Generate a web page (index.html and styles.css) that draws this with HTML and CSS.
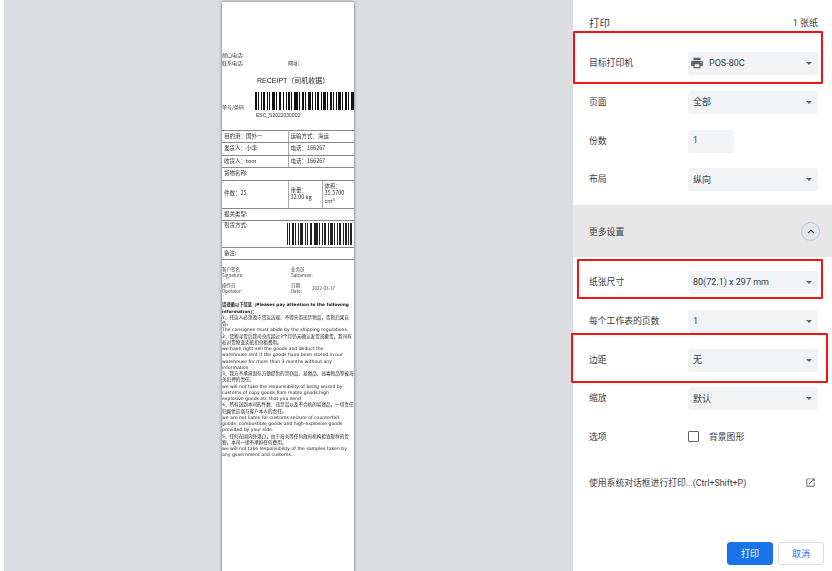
FILE: index.html
```html
<!DOCTYPE html>
<html lang="zh-CN">
<head>
    <meta charset="UTF-8">
    <meta name="viewport" content="width=device-width, initial-scale=1.0">
    <title>打印</title>
    <link rel="stylesheet" href="styles.css">
</head>
<body>
    <div class="preview">
        <div class="paper">
            <div class="contact">
                <div>邮口电话:</div>
                <div class="contact-row"><span class="contact-left">联系电话:</span><span>网址:</span></div>
            </div>
            <div class="receipt-title">RECEIPT（司机收据）</div>
            <div class="waybill">
                <span class="waybill-label">单号/条码</span>
                <svg class="barcode-main" viewBox="0 0 99 18" preserveAspectRatio="none">
                    <path fill="#111" d="M0 0h2v18H0zM3 0h1v18H3zM6 0h1v18H6zM8 0h2v18H8zM12 0h1v18h-1zM14 0h1v18h-1zM17 0h3v18h-3zM21 0h1v18h-1zM24 0h2v18h-2zM28 0h1v18h-1zM31 0h1v18h-1zM33 0h2v18h-2zM36 0h1v18h-1zM39 0h4v18h-4zM44 0h1v18h-1zM47 0h2v18h-2zM50 0h1v18h-1zM53 0h3v18h-3zM57 0h1v18h-1zM60 0h1v18h-1zM62 0h2v18h-2zM66 0h1v18h-1zM68 0h3v18h-3zM72 0h1v18h-1zM75 0h2v18h-2zM78 0h1v18h-1zM81 0h1v18h-1zM83 0h3v18h-3zM87 0h1v18h-1zM90 0h2v18h-2zM93 0h1v18h-1zM96 0h3v18h-3z"/>
                </svg>
            </div>
            <div class="waybill-no">ESC_S2022030002</div>

            <table class="info-table">
                <colgroup>
                    <col class="col-a">
                    <col class="col-b">
                    <col class="col-c">
                </colgroup>
                <tr class="row-s">
                    <td>目的港：国外一</td>
                    <td colspan="2">运输方式：海运</td>
                </tr>
                <tr class="row-s">
                    <td>发货人：小李</td>
                    <td colspan="2">电话：166267</td>
                </tr>
                <tr class="row-s">
                    <td>收货人：tom</td>
                    <td colspan="2">电话：166267</td>
                </tr>
                <tr class="row-s">
                    <td colspan="3">货物名称:</td>
                </tr>
                <tr class="row-l">
                    <td>件数：25</td>
                    <td>重量：<br>32.00 kg</td>
                    <td>体积：<br>35.5700<br>cm³</td>
                </tr>
                <tr class="row-s">
                    <td colspan="3">报关类型:</td>
                </tr>
                <tr class="row-code">
                    <td colspan="3">
                        <div class="arrival">
                            <span>到货方式:</span>
                            <svg class="barcode-small" viewBox="0 0 65 22" preserveAspectRatio="none">
                                <path fill="#222" d="M0 0h1v22H0zM2 0h1v22H2zM5 0h2v22H5zM8 0h1v22H8zM11 0h1v22h-1zM13 0h3v22h-3zM18 0h1v22h-1zM20 0h1v22h-1zM23 0h2v22h-2zM27 0h4v22h-4zM32 0h1v22h-1zM35 0h1v22h-1zM37 0h2v22h-2zM41 0h1v22h-1zM43 0h3v22h-3zM47 0h1v22h-1zM50 0h1v22h-1zM52 0h2v22h-2zM56 0h1v22h-1zM58 0h2v22h-2zM61 0h1v22h-1zM63 0h2v22h-2z"/>
                            </svg>
                        </div>
                    </td>
                </tr>
                <tr class="row-s">
                    <td colspan="3">备注:</td>
                </tr>
            </table>

            <div class="sign-row sign-first">
                <div class="sign-left">客户签名<br>Signature:</div>
                <div>业务员<br>Salesman:</div>
            </div>
            <div class="sign-row">
                <div class="sign-left">操作员<br>Operator:</div>
                <div>日期<br>Date:</div>
                <div class="sign-date">2022-03-17</div>
            </div>

            <div class="notes">
                <div class="notes-title">请遵循以下信息（Pleases pay attention to the following information）：</div>
                <div>1、托运人必须遵守货运法规、不得夹带违禁物品，否则后果自负。</div>
                <div>The consignee must abide by the shipping regulations.</div>
                <div>2、货物寻货后我司仓库超过3个月仍未确认发货或撤货，我司有权对货物变卖抵扣仓租费用。</div>
                <div>we have right sell the goods and deduct the<br>warehouse rent if the goods have been stored in our<br>warehouse for more than 3 months without any<br>information</div>
                <div>3、我方不承担因存方便提供的禁商品、易燃品、高毒物品等被海关扣押的责任。</div>
                <div>we will not take the responsibility of being seized by<br>customs of copy goods,flam mable goods,high<br>explosive goods etc that you send</div>
                <div>4、所有送到本司的件数、违禁品以及不合格的易燃品，一切责任归属供应商与客户本人的责任。</div>
                <div>we are not liable for customs seizure of counterfeit<br>goods ,combustible goods and high-explosive goods<br>provided by your side.</div>
                <div>5、任何在国内外港口，由于海关等任何政府机构检查取样的货物，本司一律不承担任何费用。</div>
                <div>we will not take responsibility of the samples taken by<br>any government and customs.</div>
            </div>
        </div>
    </div>

    <div class="panel">
        <div class="panel-head">
            <span class="panel-title">打印</span>
            <span class="sheet-count">1 张纸</span>
        </div>

        <div class="setting">
            <span class="setting-label">目标打印机</span>
            <div class="select">
                <svg class="printer-icon" viewBox="0 0 24 24"><path d="M19 8H5c-1.66 0-3 1.34-3 3v6h4v4h12v-4h4v-6c0-1.66-1.34-3-3-3zm-3 11H8v-5h8v5zm3-7c-.55 0-1-.45-1-1s.45-1 1-1 1 .45 1 1-.45 1-1 1zm-1-9H6v4h12V3z"/></svg>
                <span class="select-text">POS-80C</span>
            </div>
        </div>
        <div class="setting">
            <span class="setting-label">页面</span>
            <div class="select"><span class="select-text">全部</span></div>
        </div>
        <div class="setting">
            <span class="setting-label">份数</span>
            <div class="copies">1</div>
        </div>
        <div class="setting">
            <span class="setting-label">布局</span>
            <div class="select"><span class="select-text">纵向</span></div>
        </div>

        <div class="more">
            <span>更多设置</span>
            <span class="more-btn">
                <svg viewBox="0 0 10 6"><path d="M1.2 5L5 1.4 8.8 5" fill="none" stroke="#3c4043" stroke-width="1.5"/></svg>
            </span>
        </div>

        <div class="setting">
            <span class="setting-label">纸张尺寸</span>
            <div class="select"><span class="select-text">80(72.1) x 297 mm</span></div>
        </div>
        <div class="setting">
            <span class="setting-label">每个工作表的页数</span>
            <div class="select"><span class="select-text">1</span></div>
        </div>
        <div class="setting">
            <span class="setting-label">边距</span>
            <div class="select"><span class="select-text">无</span></div>
        </div>
        <div class="setting">
            <span class="setting-label">缩放</span>
            <div class="select"><span class="select-text">默认</span></div>
        </div>
        <div class="setting">
            <span class="setting-label">选项</span>
            <label class="option">
                <span class="checkbox"></span>
                <span>背景图形</span>
            </label>
        </div>

        <div class="system-dialog">
            <span>使用系统对话框进行打印...(Ctrl+Shift+P)</span>
            <svg class="open-icon" viewBox="0 0 24 24"><path d="M19 19H5V5h7V3H5c-1.11 0-2 .9-2 2v14c0 1.1.89 2 2 2h14c1.1 0 2-.9 2-2v-7h-2v7zM14 3v2h3.59l-9.83 9.83 1.41 1.41L19 6.41V10h2V3h-7z"/></svg>
        </div>

        <div class="actions">
            <button class="btn btn-primary">打印</button>
            <button class="btn">取消</button>
        </div>
    </div>

    <div class="mark mark-printer"></div>
    <div class="mark mark-paper"></div>
    <div class="mark mark-margin"></div>
</body>
</html>
```

FILE: styles.css
```css
* {
    box-sizing: border-box;
}
html, body {
    height: 100%;
}
body {
    position: relative;
    display: flex;
    width: 832px;
    height: 571px;
    margin: 0;
    padding-left: 4px;
    overflow: hidden;
    background-color: #fff;
    font-family: Roboto, "Noto Sans CJK SC", sans-serif;
    color: #3c4043;
}

/* preview side */
.preview {
    display: flex;
    justify-content: center;
    width: 569px;
    height: 571px;
    padding: 2px 1px 0 0;
    overflow: hidden;
    background-color: #dcdde1;
}
.paper {
    flex: none;
    width: 132px;
    height: 640px;
    padding-top: 49px;
    background-color: #fff;
    box-shadow: 0 0 3px rgba(0, 0, 0, 0.55);
    font-family: "Noto Sans CJK SC", sans-serif;
    font-size: 5px;
    line-height: 8px;
    color: #333;
    filter: blur(0.35px);
}
.contact-row {
    display: flex;
}
.contact-left {
    width: 66px;
}
.receipt-title {
    margin-top: 10px;
    padding-left: 35px;
    font-family: "Liberation Sans", "Noto Sans CJK SC", sans-serif;
    font-size: 7px;
    color: #222;
}
.waybill {
    display: flex;
    align-items: flex-end;
    justify-content: space-between;
    height: 18px;
    margin-top: 7px;
}
.waybill-label {
    line-height: 6px;
}
.barcode-main {
    width: 99px;
    height: 18px;
}
.waybill-no {
    margin-top: 1px;
    padding-left: 34px;
    font-family: "Liberation Sans", sans-serif;
}
.info-table {
    width: 132px;
    margin-top: 11px;
    table-layout: fixed;
    border-collapse: collapse;
    border-top: 1px solid #777;
    border-bottom: 1px solid #555;
}
.col-a {
    width: 66px;
}
.col-b {
    width: 34px;
}
.col-c {
    width: 32px;
}
.info-table td {
    padding: 0 1px 0 2px;
    border: 1px solid #888;
    border-left: 0;
    border-right: 1px solid #aaa;
    font-size: 5.5px;
    line-height: 7.5px;
    vertical-align: middle;
}
.info-table td:last-child {
    border-right: 0;
}
.row-s {
    height: 12.4px;
}
.row-l {
    height: 28px;
}
.row-code {
    height: 27px;
}
.info-table .row-code td {
    padding-right: 2px;
}
.arrival {
    display: flex;
    justify-content: space-between;
    align-items: flex-start;
}
.barcode-small {
    width: 65px;
    height: 22px;
    margin-top: 1px;
}
.sign-row {
    display: flex;
    font-size: 4.5px;
    line-height: 6px;
    margin-top: 4px;
    color: #444;
}
.sign-first {
    margin-top: 6px;
}
.sign-left {
    width: 69px;
}
.sign-date {
    margin: 3px 0 0 10px;
}
.notes {
    margin-top: 8px;
    font-family: "DejaVu Sans", "Noto Sans CJK SC", sans-serif;
    font-size: 4.6px;
    line-height: 6.25px;
    color: #222;
}
.notes-title {
    font-size: 4.3px;
    font-weight: bold;
    color: #111;
}

/* settings side */
.panel {
    width: 259px;
    height: 571px;
    padding-left: 16px;
    background-color: #fff;
    font-size: 8.8px;
}
.panel-head {
    display: flex;
    justify-content: space-between;
    align-items: center;
    width: 229px;
    height: 44px;
    padding-top: 1px;
}
.panel-title {
    font-size: 10.5px;
}
.sheet-count {
    font-size: 9px;
}
.setting {
    display: flex;
    align-items: flex-start;
    height: 38.75px;
    padding-top: 8px;
}
.setting-label {
    flex: none;
    width: 99px;
    line-height: 22px;
}
.select {
    position: relative;
    display: flex;
    align-items: center;
    width: 130px;
    height: 23px;
    padding: 0 0 1px 5px;
    background-color: #f1f3f4;
    border-radius: 3px;
}
.select::after {
    content: "";
    position: absolute;
    right: 6px;
    top: 10px;
    border-top: 3px solid #5f6368;
    border-left: 3px solid transparent;
    border-right: 3px solid transparent;
}
.select-text {
    font-size: 9px;
}
.printer-icon {
    width: 14px;
    height: 14px;
    margin-right: 5px;
    margin-left: -3px;
    fill: #5f6368;
}
.copies {
    width: 46px;
    height: 23px;
    padding-left: 5px;
    line-height: 21px;
    background-color: #f1f3f4;
    border-radius: 3px;
}
.more {
    display: flex;
    justify-content: space-between;
    align-items: center;
    height: 52px;
    margin: 6px 0 6px -16px;
    padding: 0 12px 0 16px;
    background-color: #e7e7e7;
}
.more-btn {
    display: flex;
    justify-content: center;
    align-items: center;
    width: 19px;
    height: 19px;
    border: 1.5px solid #a8c7f0;
    border-radius: 50%;
}
.more-btn svg {
    width: 8px;
    height: 5px;
}
.option {
    display: flex;
    align-items: center;
    gap: 10px;
    height: 21px;
}
.checkbox {
    width: 11px;
    height: 11px;
    border: 1.5px solid #5f6368;
    border-radius: 1px;
}
.system-dialog {
    display: flex;
    justify-content: space-between;
    align-items: center;
    width: 227px;
    height: 14px;
    margin-top: 19px;
}
.open-icon {
    width: 11px;
    height: 11px;
    fill: #5f6368;
}
.actions {
    display: flex;
    justify-content: flex-end;
    gap: 5px;
    width: 235px;
    margin-top: 52px;
}
.btn {
    width: 46px;
    height: 23px;
    padding: 0;
    border: 1px solid #dadce0;
    border-radius: 3px;
    background-color: #fff;
    font-family: inherit;
    font-size: 9px;
    color: #1a73e8;
}
.btn-primary {
    border-color: #1a73e8;
    background-color: #1a73e8;
    color: #fff;
}

/* red annotation boxes drawn over the dialog */
.mark {
    position: absolute;
    border: 2px solid #f01414;
    border-radius: 1px;
}
.mark-printer {
    left: 573px;
    top: 31px;
    width: 250px;
    height: 53px;
}
.mark-paper {
    left: 577px;
    top: 259px;
    width: 246px;
    height: 40px;
}
.mark-margin {
    left: 571px;
    top: 333px;
    width: 257px;
    height: 50px;
}
```
